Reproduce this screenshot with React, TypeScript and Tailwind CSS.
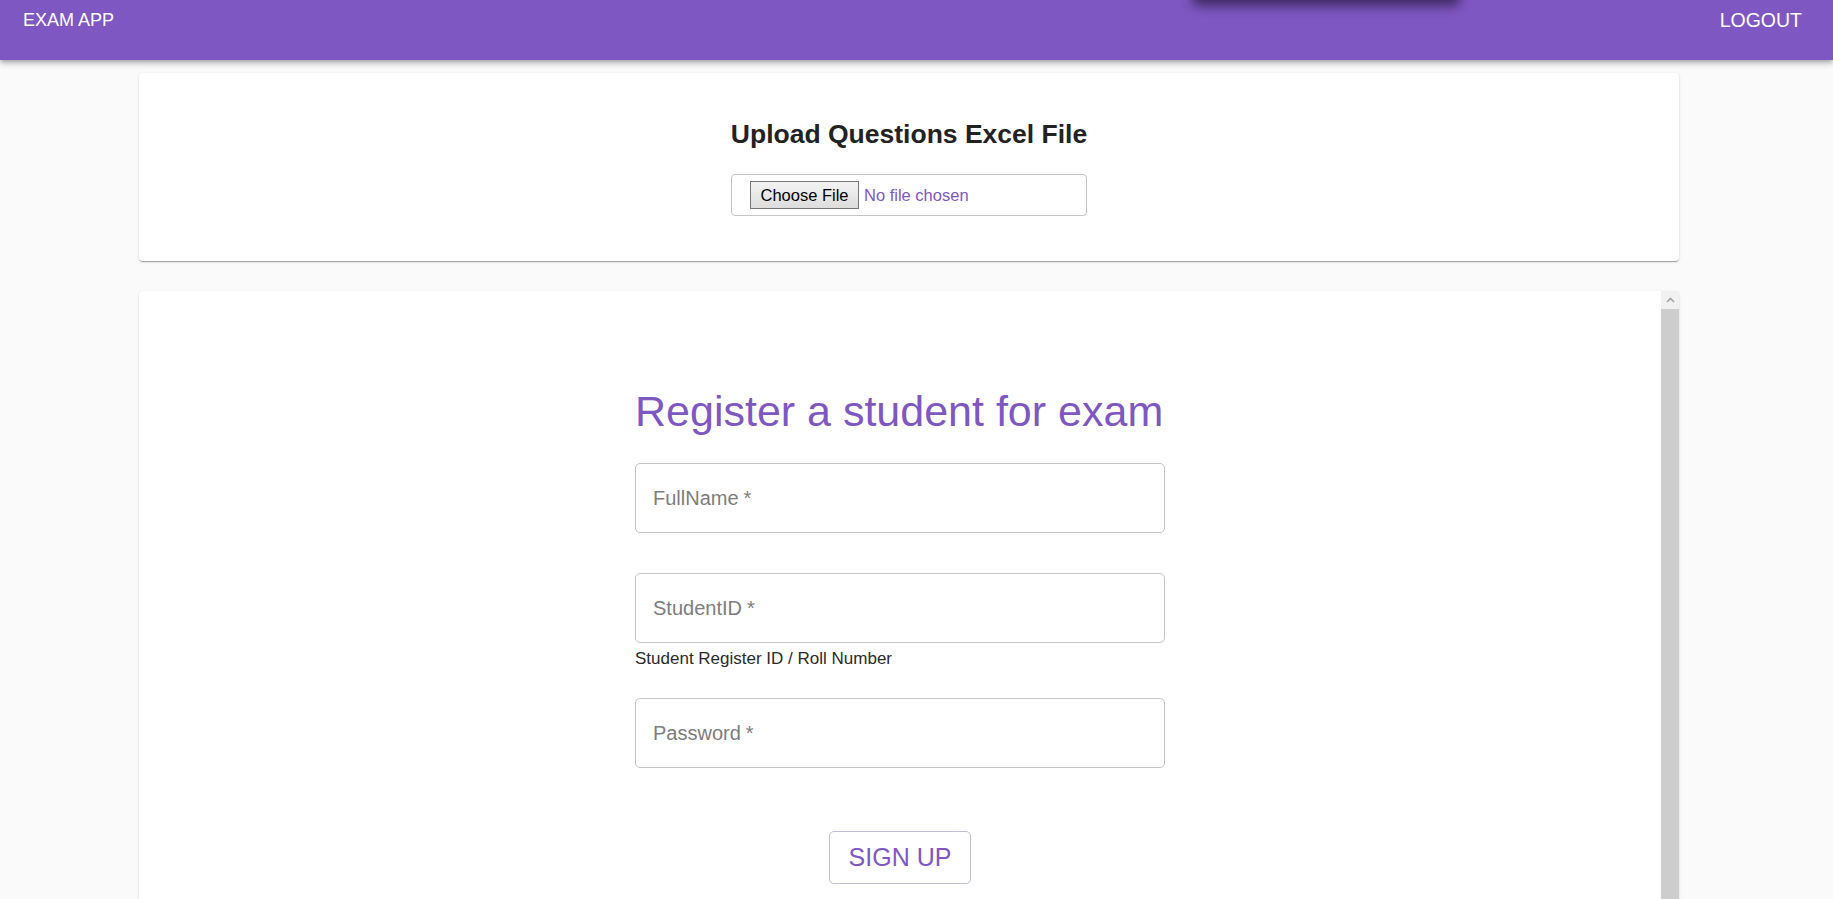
import React from "react";

function Field({ label }: { label: string }) {
  return (
    <div className="flex h-[70px] w-[530px] items-center rounded-[5px] border border-[#c4c4c4] bg-white pl-[17px]">
      <span className="text-[20px] leading-[24px] text-[#7d7d7d]">
        {label}
        <span className="ml-[5px]">*</span>
      </span>
    </div>
  );
}

export default function App() {
  return (
    <div className="relative h-[899px] w-[1833px] overflow-hidden bg-[#fafafa] font-['Liberation_Sans',Arial,sans-serif]">
      <header className="relative z-10 flex h-[60px] items-start justify-between bg-[#7e57c2] pl-[23px] pr-[31px] text-white shadow-[0_2px_4px_-1px_rgba(0,0,0,0.2),0_4px_5px_0_rgba(0,0,0,0.14),0_1px_10px_0_rgba(0,0,0,0.12)]">
        <div className="pt-[10px] text-[18px] leading-[20px]">EXAM APP</div>
        <div className="absolute left-[1192px] top-[-26px] h-[32px] w-[268px] rounded-[6px] bg-[#2e1f4a] opacity-80 blur-[6px]" />
        <div className="pt-[8px] text-[19.5px] leading-[24px]">LOGOUT</div>
      </header>

      <main className="ml-[139px] flex w-[1540px] flex-col">
        <section className="mt-[13px] flex h-[188px] flex-col items-center rounded-[4px] bg-white pt-[45px] shadow-[0_2px_1px_-1px_rgba(0,0,0,0.2),0_1px_1px_0_rgba(0,0,0,0.14),0_1px_3px_0_rgba(0,0,0,0.12)]">
          <h2 className="text-[26.5px] font-bold leading-[32px] text-[#222]">
            Upload Questions Excel File
          </h2>
          <div className="mt-[24px] flex h-[42px] w-[356px] items-center rounded-[4px] border border-[#c4c4c4] pl-[18px]">
            <span className="flex h-[28px] w-[109px] items-center justify-center border border-[#767676] bg-gradient-to-b from-[#f3f3f3] to-[#dddddd] text-[16.5px] text-black">
              Choose File
            </span>
            <span className="ml-[5px] text-[16.5px] text-[#7e57c2]">No file chosen</span>
          </div>
        </section>

        <section className="mt-[30px] flex h-[640px] rounded-t-[4px] bg-white shadow-[0_2px_1px_-1px_rgba(0,0,0,0.2),0_1px_1px_0_rgba(0,0,0,0.14),0_1px_3px_0_rgba(0,0,0,0.12)]">
          <div className="flex flex-1 flex-col items-center pt-[94px]">
            <div className="flex w-[530px] flex-col">
              <h1 className="text-[43px] leading-[52px] text-[#7e57c2]">
                Register a student for exam
              </h1>
              <div className="mt-[26px]">
                <Field label="FullName" />
              </div>
              <div className="mt-[40px]">
                <Field label="StudentID" />
              </div>
              <p className="mt-[6px] text-[17px] leading-[20px] text-[#2a2a2a]">
                Student Register ID / Roll Number
              </p>
              <div className="mt-[29px]">
                <Field label="Password" />
              </div>
              <div className="mt-[63px] flex justify-center">
                <button className="flex h-[53px] w-[142px] items-center justify-center rounded-[5px] border border-[#c4bcd2] bg-white text-[25px] text-[#7e57c2]">
                  SIGN UP
                </button>
              </div>
            </div>
          </div>
          <div className="flex w-[18px] flex-col">
            <div className="flex h-[18px] items-center justify-center bg-[#f1f1f1]">
              <svg width="9" height="6" viewBox="0 0 9 6">
                <path d="M1 5 L4.5 1.5 L8 5" fill="none" stroke="#a3a3a3" strokeWidth="1.6" />
              </svg>
            </div>
            <div className="flex-1 bg-[#cdcdcd]" />
          </div>
        </section>
      </main>
    </div>
  );
}
